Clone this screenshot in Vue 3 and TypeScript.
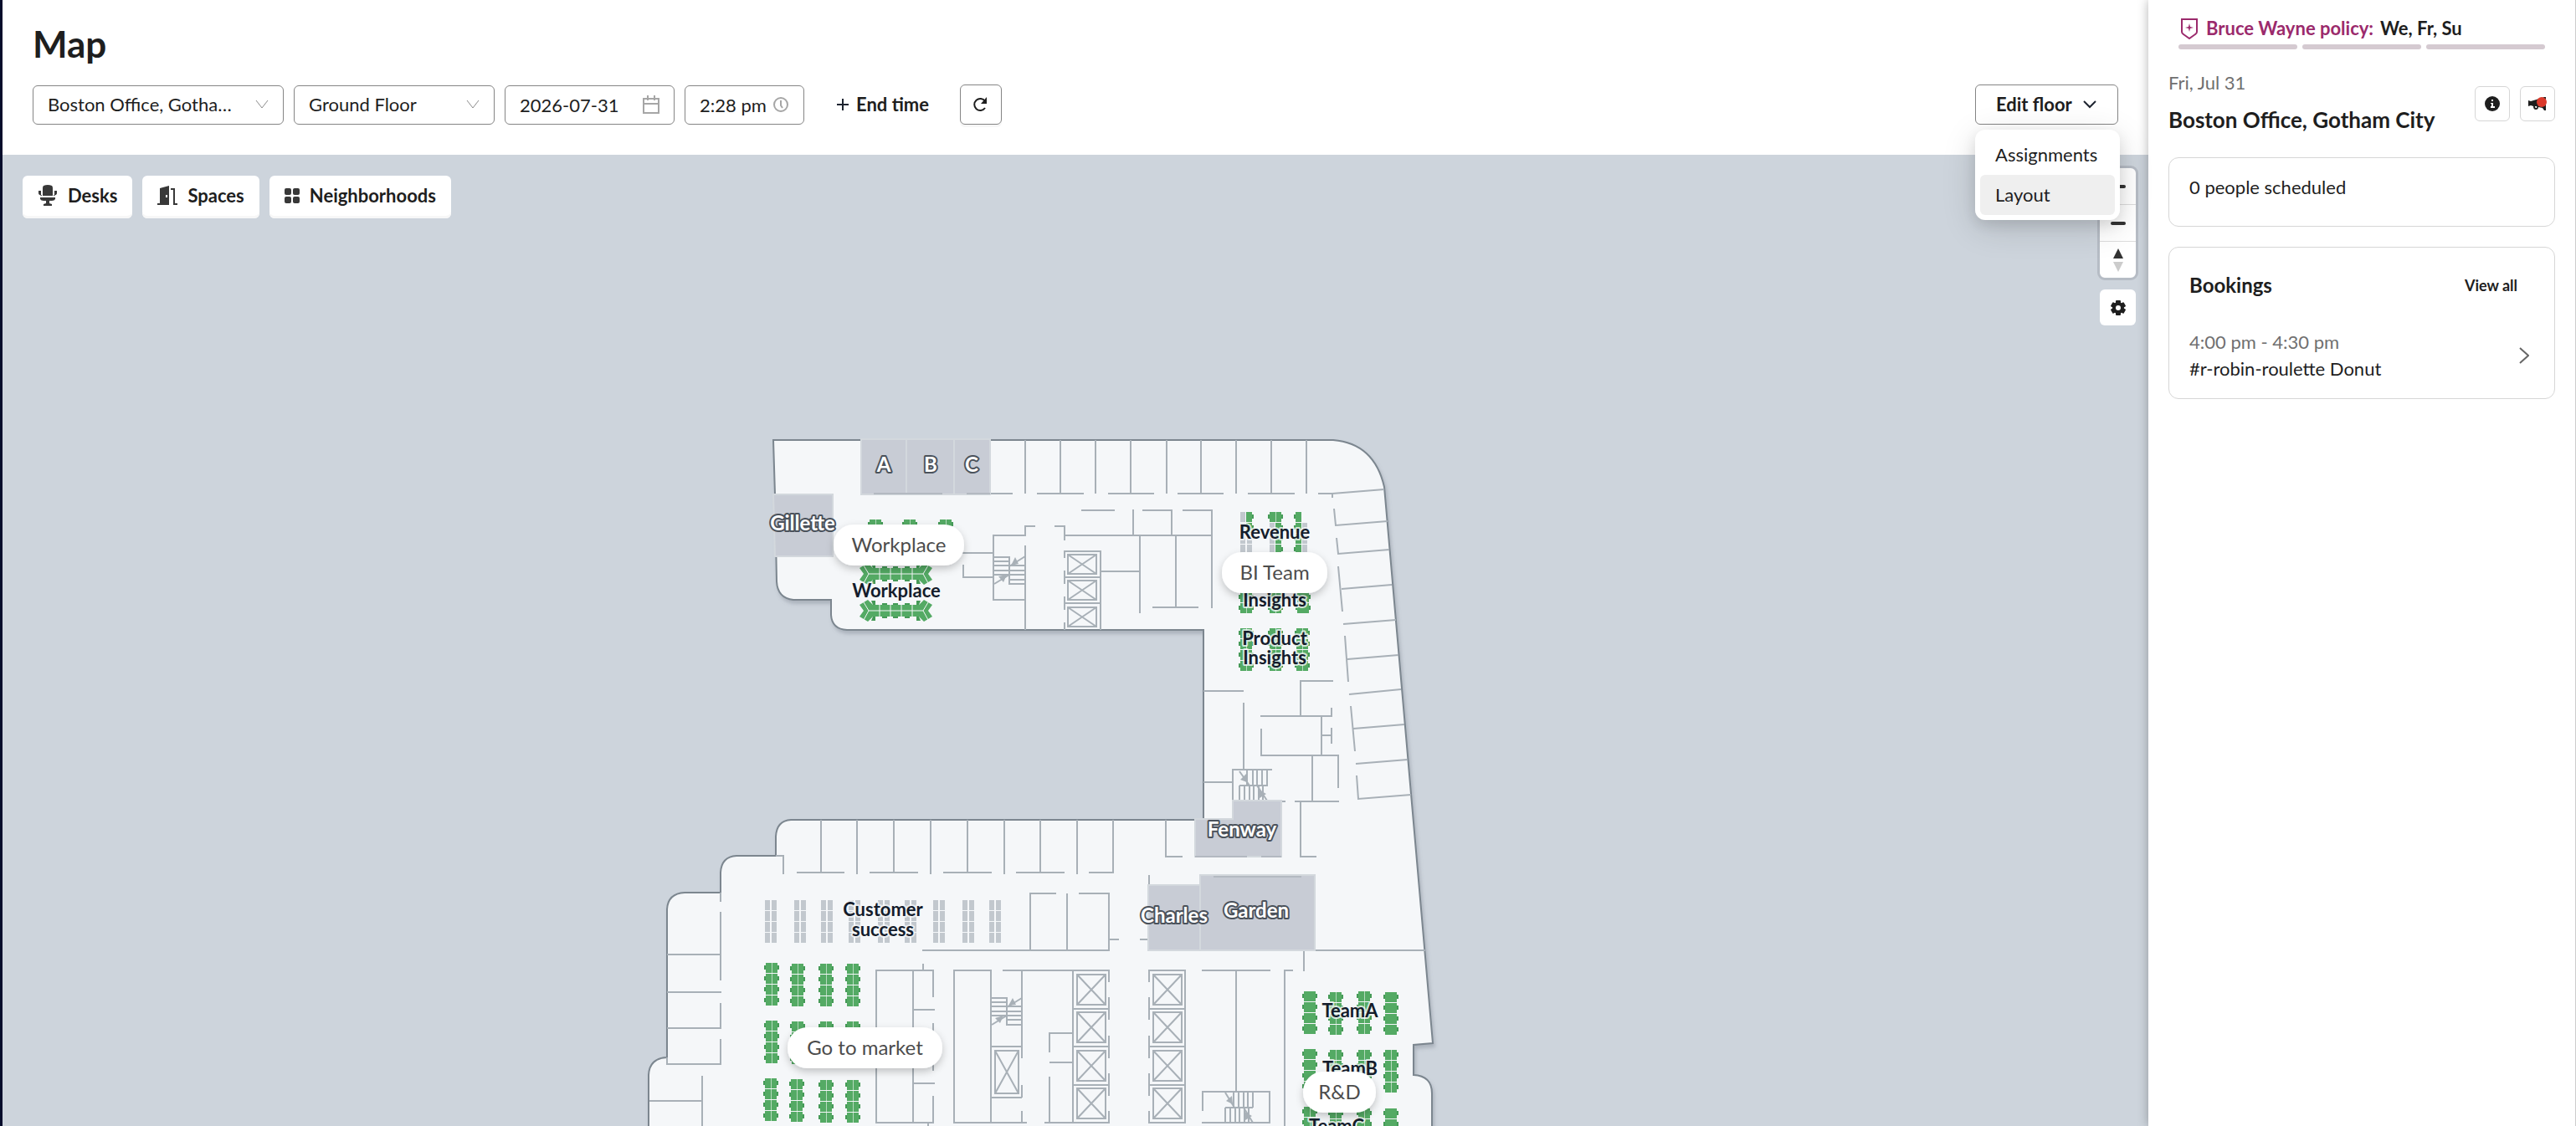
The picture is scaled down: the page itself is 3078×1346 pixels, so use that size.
<script setup lang="ts">
import { ref } from 'vue'

type Triple = [number, number, number]

const date = ref('2026-07-31')
const time = ref('2:28 pm')

// Horizontal walls: y, x start, x end
const across: Triple[] = [
  [590, 1183, 1210], [590, 1239, 1295], [590, 1324, 1379], [590, 1407, 1462], [590, 1491, 1547], [590, 1575, 1592],
  [610, 1292, 1332], [610, 1365, 1401], [610, 1413, 1449], [640, 1187, 1225], [640, 1271, 1448],
  [629, 1225, 1237], [629, 1260, 1272], [661, 1150, 1187], [690, 1150, 1187], [717, 1187, 1225],
  [683, 1315, 1362], [726, 1377, 1432], [659, 1271, 1316], [690, 1271, 1315], [721, 1271, 1315],
  [826, 1438, 1486], [920, 1472, 1520], [935, 1438, 1472], [939, 1481, 1515], [814, 1553, 1593], [856, 1506, 1592],
  [879, 1579, 1591], [903, 1507, 1600], [958, 1547, 1600], [1024, 1554, 1573], [958, 1531, 1536],
  [1136, 1570, 1703], [1024, 1392, 1413], [1123, 1362, 1372],
  [1043, 952, 1009], [1043, 1039, 1097], [1043, 1127, 1185], [1043, 1214, 1272], [1043, 1301, 1330], [1023, 927, 937],
  [1068, 1230, 1262], [1068, 1289, 1326], [1136, 1102, 1326], [1123, 1325, 1337],
  [1160, 1047, 1116], [1207, 1091, 1117], [1295, 1091, 1117], [1342, 1047, 1116],
  [1160, 1140, 1185], [1342, 1140, 1227], [1160, 1198, 1326], [1251, 1184, 1221], [1312, 1184, 1221],
  [1235, 1254, 1282], [1270, 1254, 1282], [1342, 1248, 1326],
  [1206, 1282, 1326], [1251, 1282, 1326], [1297, 1282, 1326],
  [1206, 1372, 1416], [1251, 1372, 1416], [1297, 1372, 1416], [1160, 1372, 1417], [1342, 1372, 1417],
  [1160, 1436, 1518], [1305, 1436, 1518], [1342, 1436, 1518], [1324, 1464, 1497], [1160, 1534, 1545],
  [1141, 797, 861], [1186, 797, 862], [1229, 797, 861], [1272, 796, 862], [1316, 776, 839],
]

// Vertical walls: x, y start, y end
const down: Triple[] = [
  [1225, 526, 590], [1267, 526, 590], [1309, 526, 590], [1351, 526, 590], [1394, 526, 590], [1435, 526, 590],
  [1477, 526, 590], [1519, 526, 590], [1561, 526, 590],
  [1354, 609, 640], [1400, 609, 640], [1448, 609, 727], [1362, 640, 733], [1405, 640, 726],
  [1187, 639, 718], [1225, 628, 641], [1272, 628, 646], [1225, 652, 753], [1151, 675, 691], [1206, 665, 699],
  [1315, 658, 753], [1272, 658, 667], [1272, 682, 698], [1272, 713, 729], [1272, 744, 753],
  [1486, 840, 920], [1473, 919, 957], [1554, 813, 856], [1591, 846, 857], [1579, 856, 903], [1591, 870, 889],
  [1507, 871, 904], [1599, 903, 942], [1568, 903, 958], [1554, 958, 1025],
  [1558, 1136, 1161], [1373, 1046, 1058], [1393, 980, 1024],
  [981, 980, 1044], [1024, 980, 1045], [1068, 980, 1044], [1112, 980, 1045], [1156, 980, 1044], [1200, 980, 1045],
  [1243, 980, 1044], [1287, 980, 1045], [1330, 980, 1044], [936, 1023, 1045],
  [1231, 1067, 1136], [1275, 1068, 1136], [1325, 1067, 1136],
  [1103, 1152, 1160], [1047, 1159, 1343], [1091, 1160, 1342], [1115, 1160, 1192], [1115, 1223, 1280], [1115, 1310, 1342],
  [1109, 1342, 1346], [1140, 1159, 1343], [1184, 1160, 1342], [1221, 1160, 1265], [1221, 1297, 1312], [1221, 1328, 1342],
  [1203, 1192, 1226], [1254, 1234, 1258], [1254, 1287, 1342], [1282, 1160, 1342],
  [1325, 1160, 1174], [1325, 1192, 1219], [1325, 1238, 1265], [1325, 1283, 1310], [1325, 1328, 1342],
  [1373, 1160, 1174], [1373, 1192, 1219], [1373, 1238, 1265], [1373, 1283, 1310], [1373, 1328, 1342],
  [1416, 1160, 1342], [1477, 1160, 1305], [1437, 1305, 1328], [1517, 1305, 1342], [1535, 1159, 1346],
  [861, 1067, 1078], [861, 1090, 1172], [861, 1199, 1230], [861, 1242, 1272], [797, 1264, 1272], [839, 1286, 1346],
]

// Stair treads
const treadsAcross: Triple[] = [
  ...[666, 671, 676, 682, 687].map((y): Triple => [y, 1188, 1206]),
  ...[676, 682, 687, 693, 698].map((y): Triple => [y, 1206, 1225]),
  ...[1193, 1198, 1203, 1209, 1214].map((y): Triple => [y, 1185, 1203]),
  ...[1203, 1209, 1214, 1219, 1225].map((y): Triple => [y, 1203, 1221]),
]
const treadsDown: Triple[] = [
  ...[1490, 1497, 1502, 1508, 1514].map((x): Triple => [x, 920, 939]),
  ...[1481, 1487, 1493, 1498, 1504, 1509].map((x): Triple => [x, 939, 957]),
  ...[1474, 1480, 1486, 1491, 1497].map((x): Triple => [x, 1305, 1324]),
  ...[1464, 1470, 1476, 1481, 1487, 1492].map((x): Triple => [x, 1324, 1342]),
]

const toPath = (h: Triple[], v: Triple[]) =>
  h.map(([y, a, b]) => `M${a} ${y}H${b}`).join('') + v.map(([x, a, b]) => `M${x} ${a}V${b}`).join('')

const walls = toPath(across, down)
const treads = toPath(treadsAcross, treadsDown)

// Slanted offices along the east side
const eastWalls =
  'M1592 590L1654 585M1592 590V595M1594 608L1596 628L1658 623M1597 643L1599 662L1660 657M1599 677L1604 731' +
  'M1603 704L1663 699M1605 746L1668 741M1607 760L1611 815M1610 788L1671 783M1612 830L1674 824M1614 844L1619 898' +
  'M1617 871L1678 866M1620 913L1682 908M1621 927L1623 955L1686 950'

const lifts = [
  ...[663, 694, 726].map((y) => ({ x: 1276, y, w: 34, h: 23 })),
  ...[1165, 1210, 1256, 1301].flatMap((y) => [
    { x: 1287, y, w: 34, h: 36 },
    { x: 1378, y, w: 34, h: 36 },
  ]),
  { x: 1189, y: 1256, w: 28, h: 51 },
]

// Each half of a desk row is g (available), u (unavailable) or - (none)
interface Cluster { x: number; y: number; rows: string[]; solid?: boolean }
const fill = (code: string, n = 4) => Array<string>(n).fill(code)
const green = (x: number, y: number, n = 4, solid = false): Cluster => ({ x, y, rows: fill('gg', n), solid })

const clusters: Cluster[] = [
  ...[921, 956, 988, 1021, 1056, 1088, 1122, 1157, 1189].map((x) => ({ x, y: 1076, rows: fill('uu') })),
  green(922, 1151), green(953, 1152), green(987, 1152), green(1019, 1152),
  green(922, 1220), green(953, 1221), green(987, 1221), green(1019, 1221),
  green(921, 1289), green(952, 1290), green(987, 1291), green(1019, 1291),
  green(1565, 1185, 4, true), green(1596, 1186), green(1630, 1185), green(1662, 1186, 4, true),
  green(1565, 1254, 4, true), green(1596, 1255), green(1630, 1255), green(1662, 1255),
  green(1565, 1323, 2), green(1596, 1325, 2), green(1630, 1325, 2), green(1662, 1325, 2, true),
  { x: 1489, y: 612, rows: ['ug', 'ug', 'uu', 'uu'] },
  { x: 1524, y: 612, rows: ['gg', 'ug', 'ug', 'ug'] },
  { x: 1555, y: 612, rows: ['g-', 'gu', 'gu', 'gu'] },
  green(1489, 695, 3), green(1524, 695, 3), green(1557, 695, 3, true),
  green(1489, 751), green(1524, 751), green(1556, 751),
  green(1046, 621, 1), green(1087, 621, 1), green(1130, 621, 1),
]

interface Desk { x: number; y: number; side: number; kind: string }
const desks: Desk[] = clusters.flatMap((c) =>
  c.rows.flatMap((row, i) =>
    [...row]
      .map((kind, s) => ({ x: c.x, y: c.y + i * 13, side: s === 0 ? -1 : 1, kind }))
      .filter((d) => d.kind !== '-'),
  ),
)
const seams = clusters
  .filter((c) => !c.solid)
  .flatMap((c) => c.rows.map((row, i) => ({ x: c.x, y: c.y + i * 13, row })))
  .filter((s) => s.row === 'gg')

const rooms = [
  { d: 'M1029 525H1083V591H1029Z' },
  { d: 'M1083 525H1140V591H1083Z' },
  { d: 'M1140 525H1183V591H1140Z' },
  { d: 'M924 591H995V665H926Z' },
  { d: 'M1473 957H1531V1024H1428V979H1473Z' },
  { d: 'M1372 1058H1434V1136H1372Z' },
  { d: 'M1434 1046H1571V1136H1434Z' },
]

const roomLabels = [
  { t: 'A', x: 1056, y: 564 }, { t: 'B', x: 1112, y: 564 }, { t: 'C', x: 1161, y: 564 },
  { t: 'Gillette', x: 959, y: 634 }, { t: 'Fenway', x: 1484, y: 1000 },
  { t: 'Charles', x: 1403, y: 1103 }, { t: 'Garden', x: 1501, y: 1097 },
]
const areaLabels = [
  { t: 'Workplace', x: 1071, y: 714 }, { t: 'Revenue', x: 1523, y: 644 }, { t: 'Insights', x: 1523, y: 725 },
  { t: 'Product', x: 1523, y: 771 }, { t: 'Insights', x: 1523, y: 794 },
  { t: 'Customer', x: 1055, y: 1095 }, { t: 'success', x: 1055, y: 1119 },
  { t: 'TeamA', x: 1613, y: 1216 }, { t: 'TeamB', x: 1613, y: 1285 }, { t: 'TeamC', x: 1597, y: 1354 },
]
const pills = [
  { t: 'Workplace', x: 996, y: 627, w: 156 },
  { t: 'BI Team', x: 1460, y: 660, w: 126 },
  { t: 'Go to market', x: 941, y: 1228, w: 185 },
  { t: 'R&D', x: 1557, y: 1281, w: 87 },
]
</script>

<template>
  <div class="app">
    <main class="main">
      <header class="head">
        <h1>Map</h1>
        <div class="bar">
          <div class="field office">
            <select aria-label="Office"><option>Boston Office, Gotham City</option></select>
            <svg class="caret" width="16" height="12" viewBox="0 0 16 12"><path d="M1 1L8 10L15 1" /></svg>
          </div>
          <div class="field floor">
            <select aria-label="Floor"><option>Ground Floor</option></select>
            <svg class="caret" width="16" height="12" viewBox="0 0 16 12"><path d="M1 1L8 10L15 1" /></svg>
          </div>
          <div class="field date">
            <input v-model="date" type="text" aria-label="Date" />
            <svg width="20" height="22" viewBox="0 0 20 22"><path d="M1 4H19V21H1ZM1 10H19M6 0V6M14 0V6" /></svg>
          </div>
          <div class="field time">
            <input v-model="time" type="text" aria-label="Start time" />
            <svg width="20" height="20" viewBox="0 0 20 20"><circle cx="10" cy="10" r="8" /><path d="M10 5V11L12 14" /></svg>
          </div>
          <button class="end" type="button">
            <svg width="14" height="14" viewBox="0 0 14 14"><path d="M7 0V14M0 7H14" /></svg>End time
          </button>
          <button class="square refresh" type="button" aria-label="Refresh">
            <svg width="20" height="20" viewBox="0 0 20 20"><path d="M15 14A7 7 0 1 1 15 6" fill="none" stroke="#1e1e1e" stroke-width="2" /><path d="M17 1V9H10Z" fill="#1e1e1e" /></svg>
          </button>
          <div class="edit-wrap">
            <button class="edit" type="button" aria-haspopup="menu" aria-expanded="true">
              Edit floor
              <svg width="16" height="10" viewBox="0 0 16 10"><path d="M1 1L8 8L15 1" /></svg>
            </button>
            <div class="menu" role="menu">
              <button type="button" role="menuitem">Assignments</button>
              <button type="button" role="menuitem" class="active">Layout</button>
            </div>
          </div>
        </div>
      </header>

      <section class="map" aria-label="Floor map">
        <svg class="plan" viewBox="3 185 2564 1161">
          <defs>
            <filter id="soft" x="-5%" y="-5%" width="110%" height="110%">
              <feDropShadow dx="2" dy="4" stdDeviation="2" flood-color="#6e7783" flood-opacity="0.35" />
            </filter>
            <filter id="lift" x="-20%" y="-50%" width="140%" height="220%">
              <feDropShadow dx="0" dy="4" stdDeviation="5" flood-color="#000" flood-opacity="0.22" />
            </filter>
            <g id="bench">
              <path
                class="g"
                d="M1027 679L1037 673L1043 679H1098L1104 673L1114 679L1109 686L1114 693L1104 699L1098 693H1043L1037 699L1027 693L1032 686Z"
              />
              <path class="nub" d="M1054 677H1060V679H1054ZM1067 677H1073V679H1067ZM1081 677H1087V679H1081ZM1054 693H1060V695H1054ZM1067 693H1073V695H1067ZM1081 693H1087V695H1081ZM1041 674H1046V679H1043ZM1100 674H1095V679H1098ZM1041 698H1046V693H1043ZM1100 698H1095V693H1098Z" />
              <path class="seam" d="M1032 676L1038 686L1032 697M1109 676L1103 686L1109 697M1038 686H1103M1051 679V693M1064 679V693M1077 679V693M1090 679V693" />
            </g>
          </defs>

          <path
            class="shell"
            filter="url(#soft)"
            d="M924 526H1593Q1642 530 1654 582L1712 1247L1689 1249V1285Q1711 1286 1711 1307V1360H775V1285Q776 1265 797 1264V1087Q798 1068 818 1067H861V1043Q862 1024 880 1023H927V1000Q928 981 945 980H1438V753H1012Q994 752 993 735V717H948Q929 715 928 695L926 591Z"
          />
          <path class="wall" :d="walls" />
          <path class="wall" :d="eastWalls" />
          <path class="wall" :d="treads" />
          <path class="wall" d="M1225 665L1206 677M1206 687L1188 698M1481 922L1493 939M1502 939L1514 957M1464 1306L1475 1324M1486 1324L1497 1342M1221 1193L1203 1204M1203 1214L1185 1225" />
          <path class="head-arrow" d="M1208 676L1213 666L1217 674ZM1203 687L1193 689L1199 696ZM1490 935L1482 932L1489 925ZM1504 944L1513 949L1505 954ZM1205 1202L1210 1193L1214 1201ZM1199 1214L1189 1217L1195 1223ZM1473 1320L1465 1316L1472 1310ZM1487 1329L1496 1334L1488 1339Z" />
          <g v-for="(l, i) in lifts" :key="'l' + i" class="wall">
            <rect :x="l.x" :y="l.y" :width="l.w" :height="l.h" />
            <path :d="`M${l.x} ${l.y}l${l.w} ${l.h}M${l.x + l.w} ${l.y}l${-l.w} ${l.h}`" />
          </g>
          <path v-for="(r, i) in rooms" :key="'r' + i" class="room" :d="r.d" />
          <path class="wall thin" d="M1044 590H1126M1155 590H1183M1428 1024H1490M1507 1024H1531M1450 1048H1555" />

          <g v-for="(d, i) in desks" :key="'d' + i">
            <rect
              v-if="d.kind === 'g'"
              class="nub"
              :x="d.side < 0 ? d.x - 9 : d.x + 7"
              :y="d.y + 3"
              width="2"
              height="5"
            />
            <rect v-if="d.kind === 'g'" class="g" :x="d.side < 0 ? d.x - 7 : d.x" :y="d.y" width="7" height="12" />
            <rect v-else class="u" :x="d.side < 0 ? d.x - 7 : d.x + 1" :y="d.y" width="6" height="12" />
          </g>
          <rect v-for="(s, i) in seams" :key="'s' + i" class="split" :x="s.x" :y="s.y" width="1" height="12" />
          <use href="#bench" />
          <use href="#bench" y="44" />

          <text v-for="(l, i) in areaLabels" :key="'a' + i" class="area" :x="l.x" :y="l.y">{{ l.t }}</text>
          <text v-for="(l, i) in roomLabels" :key="'n' + i" class="room-name" :x="l.x" :y="l.y">{{ l.t }}</text>

          <g v-for="(p, i) in pills" :key="'p' + i">
            <rect class="pill" filter="url(#lift)" :x="p.x" :y="p.y" :width="p.w" height="49" rx="24" />
            <text class="pill-text" :x="p.x + p.w / 2" :y="p.y + 33">{{ p.t }}</text>
          </g>
        </svg>

        <div class="tools">
          <button type="button">
            <svg width="24" height="26" viewBox="0 0 24 26" fill="#383838">
              <path d="M7 1Q12 -1 17 1Q18 2 18 4V13H6V4Q6 2 7 1Z" /><path d="M1 7H4V12H5V13Q1 12 1 10ZM23 7H20V12H19V13Q23 12 23 10Z" />
              <path d="M3 15H21V17Q20 19 17 19H14V22L17 23V25H7V23L10 22V19H7Q4 19 3 17Z" />
            </svg>Desks
          </button>
          <button type="button">
            <svg width="24" height="24" viewBox="0 0 24 24" fill="#383838">
              <path d="M3 3L14 0V23H0V21H3ZM10 11V14H12V11Z" fill-rule="evenodd" /><path d="M16 3H21V21H24V23H19V5H16Z" />
            </svg>Spaces
          </button>
          <button type="button">
            <svg width="18" height="18" viewBox="0 0 18 18" fill="#383838">
              <rect width="8" height="8" rx="2" /><rect x="10" width="8" height="8" rx="2" /><rect y="10" width="8" height="8" rx="2" /><rect x="10" y="10" width="8" height="8" rx="2" />
            </svg>Neighborhoods
          </button>
        </div>

        <div class="controls">
          <div class="zoom">
            <button type="button" aria-label="Zoom in"><svg width="20" height="20" viewBox="0 0 20 20"><path d="M3 10H17M10 3V17" /></svg></button>
            <button type="button" aria-label="Zoom out"><svg width="20" height="20" viewBox="0 0 20 20"><path d="M3 10H17" /></svg></button>
            <button type="button" aria-label="Reset north">
              <svg width="12" height="28" viewBox="0 0 12 28"><path class="n" d="M6 0L12 12H0Z" /><path class="s" d="M6 28L12 16H0Z" /></svg>
            </button>
          </div>
          <button class="gear" type="button" aria-label="Map settings">
            <svg width="20" height="20" viewBox="-10 -10 20 20">
              <circle r="5" fill="none" stroke="#1e1e1e" stroke-width="4" />
              <g fill="#1e1e1e"><rect v-for="a in 6" :key="a" x="-3" y="-9" width="6" height="4" rx="1" :transform="`rotate(${a * 60})`" /></g>
            </svg>
          </button>
        </div>
      </section>
    </main>

    <aside class="side">
      <div class="policy">
        <p>
          <svg width="22" height="26" viewBox="0 0 22 26"><path d="M2 2H20V17Q20 19 18 20L11 25L4 20Q2 19 2 17Z" fill="none" stroke="#9b2a6c" stroke-width="2" /><path d="M11 7L12 11L16 12L12 13L11 17L10 13L6 12L10 11Z" fill="#9b2a6c" /></svg>
          <a href="#policy">Bruce Wayne policy:</a><span>We, Fr, Su</span>
        </p>
        <div class="steps"><i></i><i></i><i></i></div>
      </div>

      <div class="place">
        <div class="where">
          <p class="muted">Fri, Jul 31</p>
          <h2>Boston Office, Gotham City</h2>
        </div>
        <div class="icons">
          <button type="button" aria-label="Office details">
            <svg width="18" height="18" viewBox="0 0 18 18"><circle cx="9" cy="9" r="9" fill="#1e1e1e" /><path d="M8 4H10V6H8ZM7 8H10V12H12V14H7V12H8V9H7Z" fill="#fff" /></svg>
          </button>
          <button type="button" aria-label="Announcements">
            <svg width="22" height="18" viewBox="0 0 22 18"><path d="M0 5L3 6L13 3L19 1V17L17 14L12 13Q12 16 9 16Q6 16 6 12L3 11L0 12ZM8 12Q8 14 9 14Q11 14 10 12Z" fill="#1e1e1e" fill-rule="evenodd" /><path d="M19 1H21V17H19Z" fill="#1e1e1e" /><circle cx="16" cy="7" r="6" fill="#db3a2c" /></svg>
          </button>
        </div>
      </div>

      <section class="card people"><p>0 people scheduled</p></section>

      <section class="card bookings">
        <div class="row">
          <h3>Bookings</h3>
          <a href="#bookings">View all</a>
        </div>
        <a class="booking" href="#booking">
          <span><span class="muted">4:00 pm - 4:30 pm</span><br />#r-robin-roulette Donut</span>
          <svg width="12" height="20" viewBox="0 0 12 20"><path d="M1 1L11 10L1 19" fill="none" stroke="#666" stroke-width="2" /></svg>
        </a>
      </section>
    </aside>
  </div>
</template>

<style>
body {
  margin: 0;
}
</style>

<style scoped>
* {
  box-sizing: border-box;
}
.app {
  display: flex;
  min-height: 100vh;
  font: 400 22px/32px Lato, 'Liberation Sans', sans-serif;
  color: #1e1e1e;
  background: #fff;
  overflow: hidden;
}
h1,
h2,
h3,
p {
  margin: 0;
}
button,
input,
select {
  font: inherit;
  color: inherit;
  background: none;
  border: 0;
  padding: 0;
  margin: 0;
}
a {
  color: inherit;
  text-decoration: none;
}
svg {
  flex: none;
  display: block;
}
.main {
  flex: 1;
  min-width: 0;
  display: flex;
  flex-direction: column;
  border-left: 3px solid #050d2b;
}
.head {
  padding: 24px 36px 36px;
}
h1 {
  font-size: 44px;
  line-height: 56px;
  font-weight: 700;
  margin-bottom: 21px;
}
.bar {
  display: flex;
  align-items: center;
  gap: 12px;
  height: 48px;
}
.field {
  display: flex;
  align-items: center;
  height: 47px;
  border: 1px solid #858585;
  border-radius: 6px;
  padding: 0 17px;
}
.field select,
.field input {
  flex: 1;
  min-width: 0;
  width: 100%;
  height: 45px;
  outline: 0;
  appearance: none;
  text-overflow: ellipsis;
}
.field svg {
  fill: none;
  stroke: #a6a6a6;
  stroke-width: 2;
}
.field .caret {
  stroke-width: 1;
  stroke: #8c8c8c;
}
.office {
  width: 300px;
}
.office select {
  margin-right: 20px;
}
.floor {
  width: 240px;
}
.date {
  width: 203px;
}
.time {
  width: 143px;
}
.end {
  display: flex;
  align-items: center;
  gap: 9px;
  margin-left: 27px;
  font-weight: 700;
}
.end svg {
  stroke: #1e2430;
  stroke-width: 2;
}
.square {
  display: grid;
  place-items: center;
  width: 50px;
  height: 48px;
  border: 1px solid #858585;
  border-radius: 6px;
  box-shadow: 0 3px 0 #f6f6f6;
}
.refresh {
  margin-left: 25px;
}
.edit-wrap {
  position: relative;
  margin-left: auto;
}
.edit {
  display: flex;
  align-items: center;
  justify-content: space-between;
  width: 171px;
  height: 48px;
  padding: 0 25px 0 24px;
  border: 1px solid #858585;
  border-radius: 6px;
  font-weight: 700;
}
.edit svg {
  fill: none;
  stroke: #1e2430;
  stroke-width: 2;
}
.menu {
  position: absolute;
  z-index: 5;
  top: 54px;
  left: 0;
  width: 173px;
  padding: 6px;
  border-radius: 12px;
  background: #fff;
  box-shadow: 0 9px 42px rgba(0, 0, 0, 0.14), 0 6px 16px rgba(0, 0, 0, 0.1);
}
.menu button {
  display: block;
  width: 100%;
  height: 48px;
  padding: 0 18px;
  border-radius: 6px;
  text-align: left;
}
.menu .active {
  background: #efefef;
}
.map {
  position: relative;
  flex: 1;
  background: #cdd4dc;
}
.plan {
  width: 100%;
  height: auto;
}
.shell {
  fill: #f5f7f9;
  stroke: #7b868f;
  stroke-width: 2;
}
.wall {
  fill: none;
  stroke: #a8b0b7;
  stroke-width: 2;
}
.thin {
  stroke: #b3b9c1;
}
.head-arrow {
  fill: #a8b0b7;
}
.room {
  fill: #c8ccd5;
  stroke: #d3d8dd;
  stroke-width: 2;
}
.g {
  fill: #54aa64;
}
.nub {
  fill: #459a57;
}
.u {
  fill: #c2c8ce;
}
.split {
  fill: #b5dabd;
}
.seam {
  fill: none;
  stroke: #f5f7f9;
  stroke-width: 1;
}
.plan text {
  text-anchor: middle;
}
.area,
.room-name {
  font-size: 22px;
  font-weight: 700;
  paint-order: stroke;
  stroke-width: 4px;
  stroke-linejoin: round;
}
.area {
  fill: #141c2b;
  stroke: rgba(245, 247, 249, 0.8);
}
.room-name {
  font-size: 24px;
  fill: #fff;
  stroke: #4b525b;
}
.pill {
  fill: #fff;
}
.pill-text {
  font-size: 24px;
  fill: #4c4c4c;
}
.tools {
  position: absolute;
  top: 25px;
  left: 24px;
  display: flex;
  gap: 12px;
}
.tools button {
  display: flex;
  align-items: center;
  gap: 12px;
  height: 51px;
  padding: 0 18px 3px;
  border-radius: 6px;
  background: #fff;
  box-shadow: inset 0 -3px 0 #f7f7f7;
  font-weight: 700;
}
.controls {
  position: absolute;
  top: 13px;
  right: 12px;
}
.zoom {
  border: 3px solid #b6bcc5;
  border-radius: 9px;
  overflow: hidden;
  background: #fff;
}
.zoom button {
  display: grid;
  place-items: center;
  width: 43px;
  height: 44px;
}
.zoom button:not(:last-child) {
  border-bottom: 1px solid #ddd;
}
.zoom button:last-child {
  height: 43px;
}
.zoom svg {
  stroke: #333;
  stroke-width: 4;
  stroke-linecap: round;
}
.zoom .n {
  fill: #333;
  stroke: none;
}
.zoom .s {
  fill: #ccc;
  stroke: none;
}
.gear {
  display: grid;
  place-items: center;
  width: 43px;
  height: 43px;
  margin: 11px 3px 0;
  border-radius: 6px;
  background: #fff;
}
.side {
  position: relative;
  width: 511px;
  flex: none;
  padding: 18px 24px;
  border-right: 1px solid #ccc;
  box-shadow: 0 0 12px rgba(0, 0, 0, 0.3);
  background: #fff;
}
.policy {
  padding: 0 12px;
}
.policy p {
  display: flex;
  align-items: center;
  padding-left: 2px;
  font-weight: 700;
}
.policy a {
  color: #9b2a6c;
  margin: 0 8px 0 9px;
}
.steps {
  display: flex;
  gap: 6px;
  margin-top: 3px;
}
.steps i {
  flex: 1;
  height: 6px;
  border-radius: 3px;
  background: #d5cad1;
}
.muted {
  color: #707070;
}
.place {
  display: flex;
  justify-content: space-between;
  align-items: center;
  margin-top: 25px;
  height: 80px;
}
.where {
  padding-bottom: 6px;
}
h2,
h3 {
  font-size: 24px;
  line-height: 32px;
  font-weight: 700;
}
h2 {
  margin-top: 12px;
  font-size: 26px;
}
.icons {
  display: flex;
  gap: 12px;
}
.icons button {
  display: grid;
  place-items: center;
  width: 42px;
  height: 42px;
  border: 1px solid #d6d6d6;
  border-radius: 6px;
}
.card {
  border: 1px solid #d6d6d6;
  border-radius: 12px;
  padding: 19px 24px;
}
.people {
  margin-top: 24px;
  height: 83px;
}
.bookings {
  margin-top: 24px;
  height: 182px;
}
.row {
  display: flex;
  justify-content: space-between;
  align-items: center;
  margin-top: 10px;
  padding-right: 20px;
}
.row a {
  font-size: 18px;
  font-weight: 700;
}
.booking {
  display: flex;
  justify-content: space-between;
  align-items: center;
  margin-top: 36px;
  padding-right: 6px;
}
</style>
